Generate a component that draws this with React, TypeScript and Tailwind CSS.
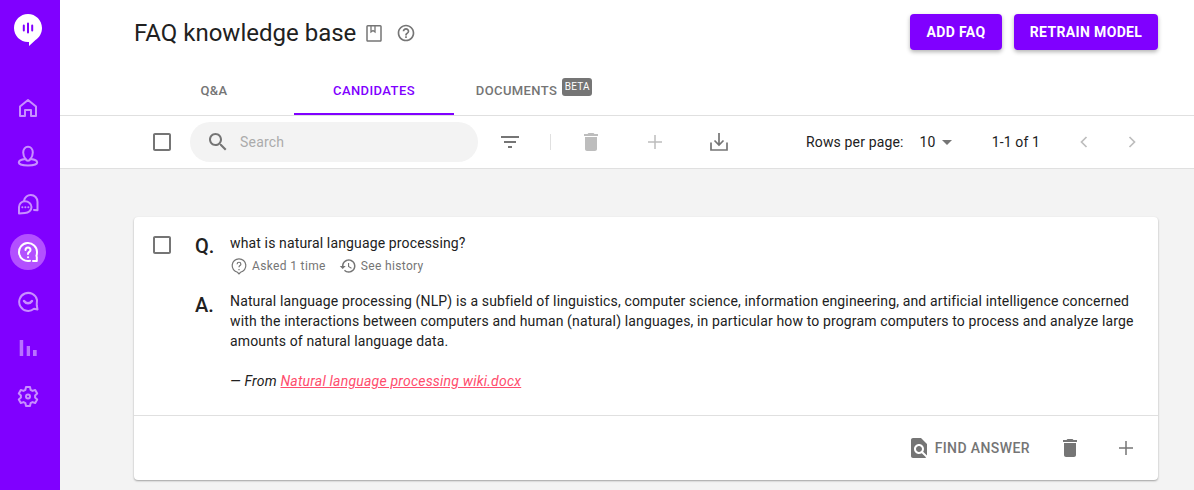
const F = { fontFamily: 'Roboto, "Liberation Sans", sans-serif' };

function M({ d, size = 24, className = "" }: { d: string; size?: number; className?: string }) {
  return (
    <svg width={size} height={size} viewBox="0 0 24 24" fill="currentColor" className={"shrink-0 " + className}>
      <path d={d} />
    </svg>
  );
}

const P = {
  trash: "M6 19c0 1.1.9 2 2 2h8c1.1 0 2-.9 2-2V7H6v12zM19 4h-3.5l-1-1h-5l-1 1H5v2h14V4z",
  plus: "M19 12.75h-6.25V19h-1.5v-6.25H5v-1.5h6.25V5h1.5v6.25H19v1.5z",
  search: "M15.5 14h-.79l-.28-.27C15.41 12.59 16 11.11 16 9.5 16 5.91 13.09 3 9.5 3S3 5.91 3 9.5 5.91 16 9.5 16c1.61 0 3.09-.59 4.23-1.57l.27.28v.79l5 4.99L20.49 19l-4.99-5zm-6 0C7.01 14 5 11.99 5 9.5S7.01 5 9.5 5 14 7.01 14 9.5 11.99 14 9.5 14z",
  filter: "M10 18h4v-2h-4v2zM3 6v2h18V6H3zm3 7h12v-2H6v2z",
  check: "M19 5v14H5V5h14m0-2H5c-1.1 0-2 .9-2 2v14c0 1.1.9 2 2 2h14c1.1 0 2-.9 2-2V5c0-1.1-.9-2-2-2z",
  help: "M11 18h2v-2h-2v2zm1-16C6.48 2 2 6.48 2 12s4.48 10 10 10 10-4.48 10-10S17.52 2 12 2zm0 18c-4.41 0-8-3.59-8-8s3.59-8 8-8 8 3.59 8 8-3.59 8-8 8zm0-14c-2.21 0-4 1.79-4 4h2c0-1.1.9-2 2-2s2 .9 2 2c0 2-3 1.75-3 5h2c0-2.25 3-2.5 3-5 0-2.21-1.79-4-4-4z",
  history: "M13 3c-4.97 0-9 4.03-9 9H1l3.89 3.89.07.14L9 12H6c0-3.87 3.13-7 7-7s7 3.13 7 7-3.13 7-7 7c-1.93 0-3.68-.79-4.94-2.06l-1.42 1.42C8.27 19.99 10.51 21 13 21c4.97 0 9-4.03 9-9s-4.03-9-9-9zm-1 5v5l4.28 2.54.72-1.21-3.5-2.08V8H12z",
  find: "M20 19.59V8l-6-6H6c-1.1 0-1.99.9-1.99 2L4 20c0 1.1.89 2 1.99 2H18c.45 0 .85-.15 1.19-.4l-4.43-4.43c-.8.52-1.74.83-2.76.83-2.76 0-5-2.24-5-5s2.24-5 5-5 5 2.24 5 5c0 1.02-.31 1.96-.83 2.75L20 19.59zM9 13c0 1.66 1.34 3 3 3s3-1.34 3-3-1.34-3-3-3-3 1.34-3 3z",
};

function Stroke({ children, className = "", size = 24, w = 2 }: { children: React.ReactNode; className?: string; size?: number; w?: number }) {
  return (
    <svg width={size} height={size} viewBox="0 0 24 24" fill="none" stroke="currentColor" strokeWidth={w} strokeLinejoin="round" strokeLinecap="round" className={"shrink-0 " + className}>
      {children}
    </svg>
  );
}

function Sidebar() {
  const nav = "text-[#c88fff]";
  return (
    <aside className="w-[60px] shrink-0 h-[490px] bg-[#8000ff] flex flex-col items-center pr-[4px]">
      <svg width="28" height="32" viewBox="0 0 28 32" className="mt-[14px] shrink-0">
        <path d="M14 0C6.300 0 0 6.300 0 14s6.300 14 14 14h1v4l6.500-6C25.400 23.500 28 19 28 14 28 6.300 21.700 0 14 0z" fill="#fff" />
        <path d="M14 9.500v9M9.800 11.500v5M18.200 11.500v5" stroke="#8000ff" strokeWidth="2" strokeLinecap="round" />
      </svg>
      <div className={"mt-[44px] flex flex-col items-center gap-[12px] " + nav}>
        <div className="w-9 h-9 flex items-center justify-center">
          <Stroke>
            <path d="M4 10.500 12 4l8 6.500V20h-5v-6H9v6H4z" />
          </Stroke>
        </div>
        <div className="w-9 h-9 flex items-center justify-center">
          <Stroke>
            <path d="M9.500 15C8 13 7.200 11 7.200 8.500 7.200 5 9.300 2.800 12 2.800s4.800 2.200 4.800 5.700c0 2.500-.8 4.500-2.300 6.500" />
            <path d="M9.500 15C5 15.500 2.800 16.800 2.800 18.500c0 1.800 4.300 3 9.200 3s9.200-1.200 9.200-3c0-1.700-2.200-3-6.700-3.500" />
            <path d="M9.500 15c.5 1 1.500 1.700 2.500 1.700s2-.7 2.500-1.700" />
          </Stroke>
        </div>
        <div className="w-9 h-9 flex items-center justify-center">
          <Stroke>
            <path d="M8 8.800C9 5 11.800 3 14.800 3c3.900 0 6.700 3 6.700 7v8.200l-3.500-.3" />
            <path d="M3 15c0-3.300 2.500-5.700 6-5.700s6.500 2.400 6.500 5.700-3 5.900-6.500 5.900l-6 .6z" />
            <path d="M6.300 15.200h.1M9.300 15.200h.1M12.300 15.200h.1" />
          </Stroke>
        </div>
        <div className="w-9 h-9 rounded-full bg-[#b350ff] flex items-center justify-center text-white">
          <Stroke>
            <path d="M14 20.800A9 9 0 1 1 21 12c0 1.500-.2 2.700-.6 4" />
            <path d="M20.800 17v4h-3.800" />
            <path d="M9.500 10a2.500 2.500 0 0 1 5 0c0 2-2.500 1.800-2.500 4M12 17.300h.1" />
          </Stroke>
        </div>
        <div className="w-9 h-9 flex items-center justify-center">
          <Stroke>
            <path d="M21.500 21.500 18 20.800A9 9 0 1 1 21 12c0 2-.4 3.700-.2 5.500z" />
            <path d="M8 13c1 1.500 2.500 2.200 4 2.200s3-.7 4-2.200" strokeWidth="2.400" />
          </Stroke>
        </div>
        <div className="w-9 h-9 flex items-center justify-center">
          <svg width="24" height="24" viewBox="0 0 24 24" fill="currentColor" className="shrink-0 opacity-80">
            <path d="M3.700 4h3.500v16H3.700zM10.700 10H14v10h-3.300zM17 14h3.700v6H17z" />
          </svg>
        </div>
        <div className="w-9 h-9 flex items-center justify-center">
          <Stroke>
            <circle cx="12" cy="12.500" r="2" />
            <path d="M10 3h4l.6 2.800 1.900 1.100 2.700-.9 2 3.500-2.100 1.900v2.200l2.100 1.900-2 3.500-2.700-.9-1.900 1.100-.6 2.800h-4l-.6-2.800-1.900-1.100-2.700.9-2-3.500 2.100-1.900v-2.200L2.800 9.500l2-3.500 2.700.9 1.900-1.100z" />
          </Stroke>
        </div>
      </div>
    </aside>
  );
}

function Main() {
  return (
    <main className="flex-1 min-w-0 flex flex-col h-[490px] overflow-hidden bg-[#f3f3f3]">
      <div className="bg-white h-[116px] shrink-0 border-b border-[#e0e0e0] flex flex-col pl-[74px] pr-[36px]">
        <div className="h-[64px] flex items-center justify-between shrink-0">
          <div className="flex items-center pt-[1px]">
            <h1 className="text-[24px] leading-[36px] text-[#212121] font-normal">FAQ knowledge base</h1>
            <svg width="20" height="20" viewBox="0 0 20 20" fill="none" stroke="#757575" strokeWidth="1.500" className="ml-[8px] shrink-0">
              <path d="M3.800 2.700h12.400a.8.8 0 0 1 .8.800v13.800a.8.8 0 0 1-.8.800H3.800a.8.8 0 0 1-.8-.800V3.500a.8.8 0 0 1 .8-.800z" />
              <path d="M7 3v6l2-1.500L11 9V3" strokeWidth="1.300" />
            </svg>
            <M d={P.help} size={20} className="ml-[12px] text-[#757575]" />
          </div>
          <div className="flex gap-[12px] -mt-[1px]">
            <button className="h-[36px] w-[92px] pt-[1px] rounded-[4px] bg-[#8000ff] text-white text-[14px] font-bold tracking-[0.35px] shadow-[0_2px_4px_rgba(0,0,0,0.3)]">ADD FAQ</button>
            <button className="h-[36px] w-[144px] pt-[1px] rounded-[4px] bg-[#8000ff] text-white text-[14px] font-bold tracking-[0.35px] shadow-[0_2px_4px_rgba(0,0,0,0.3)]">RETRAIN MODEL</button>
          </div>
        </div>
        <div className="flex h-[51px] -mb-[1px] text-[13px] font-medium tracking-[0.4px] text-[#757575]">
          <div className="w-[160px] flex items-center justify-center pt-[2px]">Q&amp;A</div>
          <div className="w-[160px] flex items-center justify-center pt-[4px] text-[#8000ff] border-b-2 border-[#8000ff]">CANDIDATES</div>
          <div className="w-[160px] flex items-center justify-center pt-[2px]">
            DOCUMENTS
            <span className="ml-[5px] -mt-[7px] h-[18px] w-[30px] rounded-[3px] bg-[#757575] text-white text-[10px] leading-[17px] tracking-[0.2px] font-normal text-center">BETA</span>
          </div>
        </div>
      </div>
      <div className="bg-white h-[53px] shrink-0 border-b border-[#e0e0e0] flex items-center pl-[90px] text-[#757575]">
        <M d={P.check} size={24} />
        <div className="ml-[16px] w-[288px] h-[40px] rounded-[20px] bg-[#f3f3f3] flex items-center pl-[16px]">
          <M d={P.search} size={24} />
          <span className="ml-[10px] text-[14px] tracking-[0.2px] text-[#ababab]">Search</span>
        </div>
        <M d={P.filter} size={24} className="ml-[20px]" />
        <div className="ml-[28px] w-px h-[16px] bg-[#e0e0e0]" />
        <M d={P.trash} size={24} className="ml-[28px] text-[#bdbdbd]" />
        <M d={P.plus} size={24} className="ml-[40px] text-[#bdbdbd]" />
        <svg width="24" height="24" viewBox="0 0 24 24" fill="none" stroke="currentColor" strokeWidth="1.700" className="ml-[40px] shrink-0">
          <path d="M12 3v12M7.500 10.500 12 15l4.500-4.500M4 12.500V20h16v-7.500" />
        </svg>
        <span className="ml-[75px] text-[14px] tracking-[0.15px] text-[#212121]">Rows per page:</span>
        <span className="ml-[16px] text-[14px] tracking-[0.15px] text-[#212121]">10</span>
        <svg width="10" height="5" viewBox="0 0 10 5" className="ml-[6px] shrink-0" fill="#757575"><path d="M0 0h10L5 5z" /></svg>
        <span className="ml-[40px] text-[14px] tracking-[0.15px] text-[#212121]">1-1 of 1</span>
        <svg width="24" height="24" viewBox="0 0 24 24" fill="none" stroke="#bdbdbd" strokeWidth="1.700" className="ml-[32px] shrink-0"><path d="M14.500 7l-5 5 5 5" /></svg>
        <svg width="24" height="24" viewBox="0 0 24 24" fill="none" stroke="#bdbdbd" strokeWidth="1.700" className="ml-[24px] shrink-0"><path d="M9.500 7l5 5-5 5" /></svg>
      </div>
      <section className="mt-[48px] ml-[74px] mr-[36px] bg-white rounded-[4px] shadow-[0_1px_2px_rgba(0,0,0,0.35)] h-[263px] shrink-0 flex flex-col">
        <div className="h-[199px] shrink-0 border-b border-[#e0e0e0] flex pt-[16px] pl-[16px] pr-[20px]">
          <M d={P.check} size={24} className="text-[#757575]" />
          <div className="ml-[21px] w-[35px] text-[20px] leading-[24px] font-medium text-[#212121]">
            <div className="mt-[1px]">Q.</div>
            <div className="mt-[35px]">A.</div>
          </div>
          <div className="flex-1 min-w-0 text-[14px] text-[#212121] tracking-[0.14px]">
            <div className="leading-[20px]">what is natural language processing?</div>
            <div className="flex items-center mt-[3px] h-[20px] text-[12px] text-[#757575] tracking-[0.35px]">
              <svg width="18" height="18" viewBox="0 0 24 24" fill="none" stroke="currentColor" strokeWidth="1.600" className="shrink-0">
                <path d="M12 2.500a9 9 0 0 0-2 17.800L12 22.500l2-2.200a9 9 0 0 0-2-17.800z" />
                <path d="M9.500 9.500a2.500 2.500 0 0 1 5 0c0 2-2.500 1.800-2.500 4M12 16v1.500" />
              </svg>
              <span className="ml-[4px]">Asked 1 time</span>
              <M d={P.history} size={18} className="ml-[13px]" />
              <span className="ml-[4px]">See history</span>
            </div>
            <p className="mt-[15px] leading-[20px]">
              Natural language processing (NLP) is a subfield of linguistics, computer science, information engineering, and artificial intelligence concerned with the interactions between computers and human (natural) languages, in particular how to program computers to process and analyze large amounts of natural language data.
            </p>
            <p className="mt-[20px] leading-[20px] italic tracking-[0.21px]">
              — From <span className="text-[#ff4d6d] underline">Natural language processing wiki.docx</span>
            </p>
          </div>
        </div>
        <div className="flex-1 flex items-center justify-end pr-[20px] text-[#757575]">
          <M d={P.find} size={24} />
          <span className="ml-[4px] text-[14px] font-medium tracking-[0.4px] pt-[1px]">FIND ANSWER</span>
          <M d={P.trash} size={24} className="ml-[28px]" />
          <M d={P.plus} size={24} className="ml-[32px]" />
        </div>
      </section>
    </main>
  );
}

export default function App() {
  return (
    <div className="flex w-[1194px] h-[490px] overflow-hidden" style={F}>
      <Sidebar />
      <Main />
    </div>
  );
}
